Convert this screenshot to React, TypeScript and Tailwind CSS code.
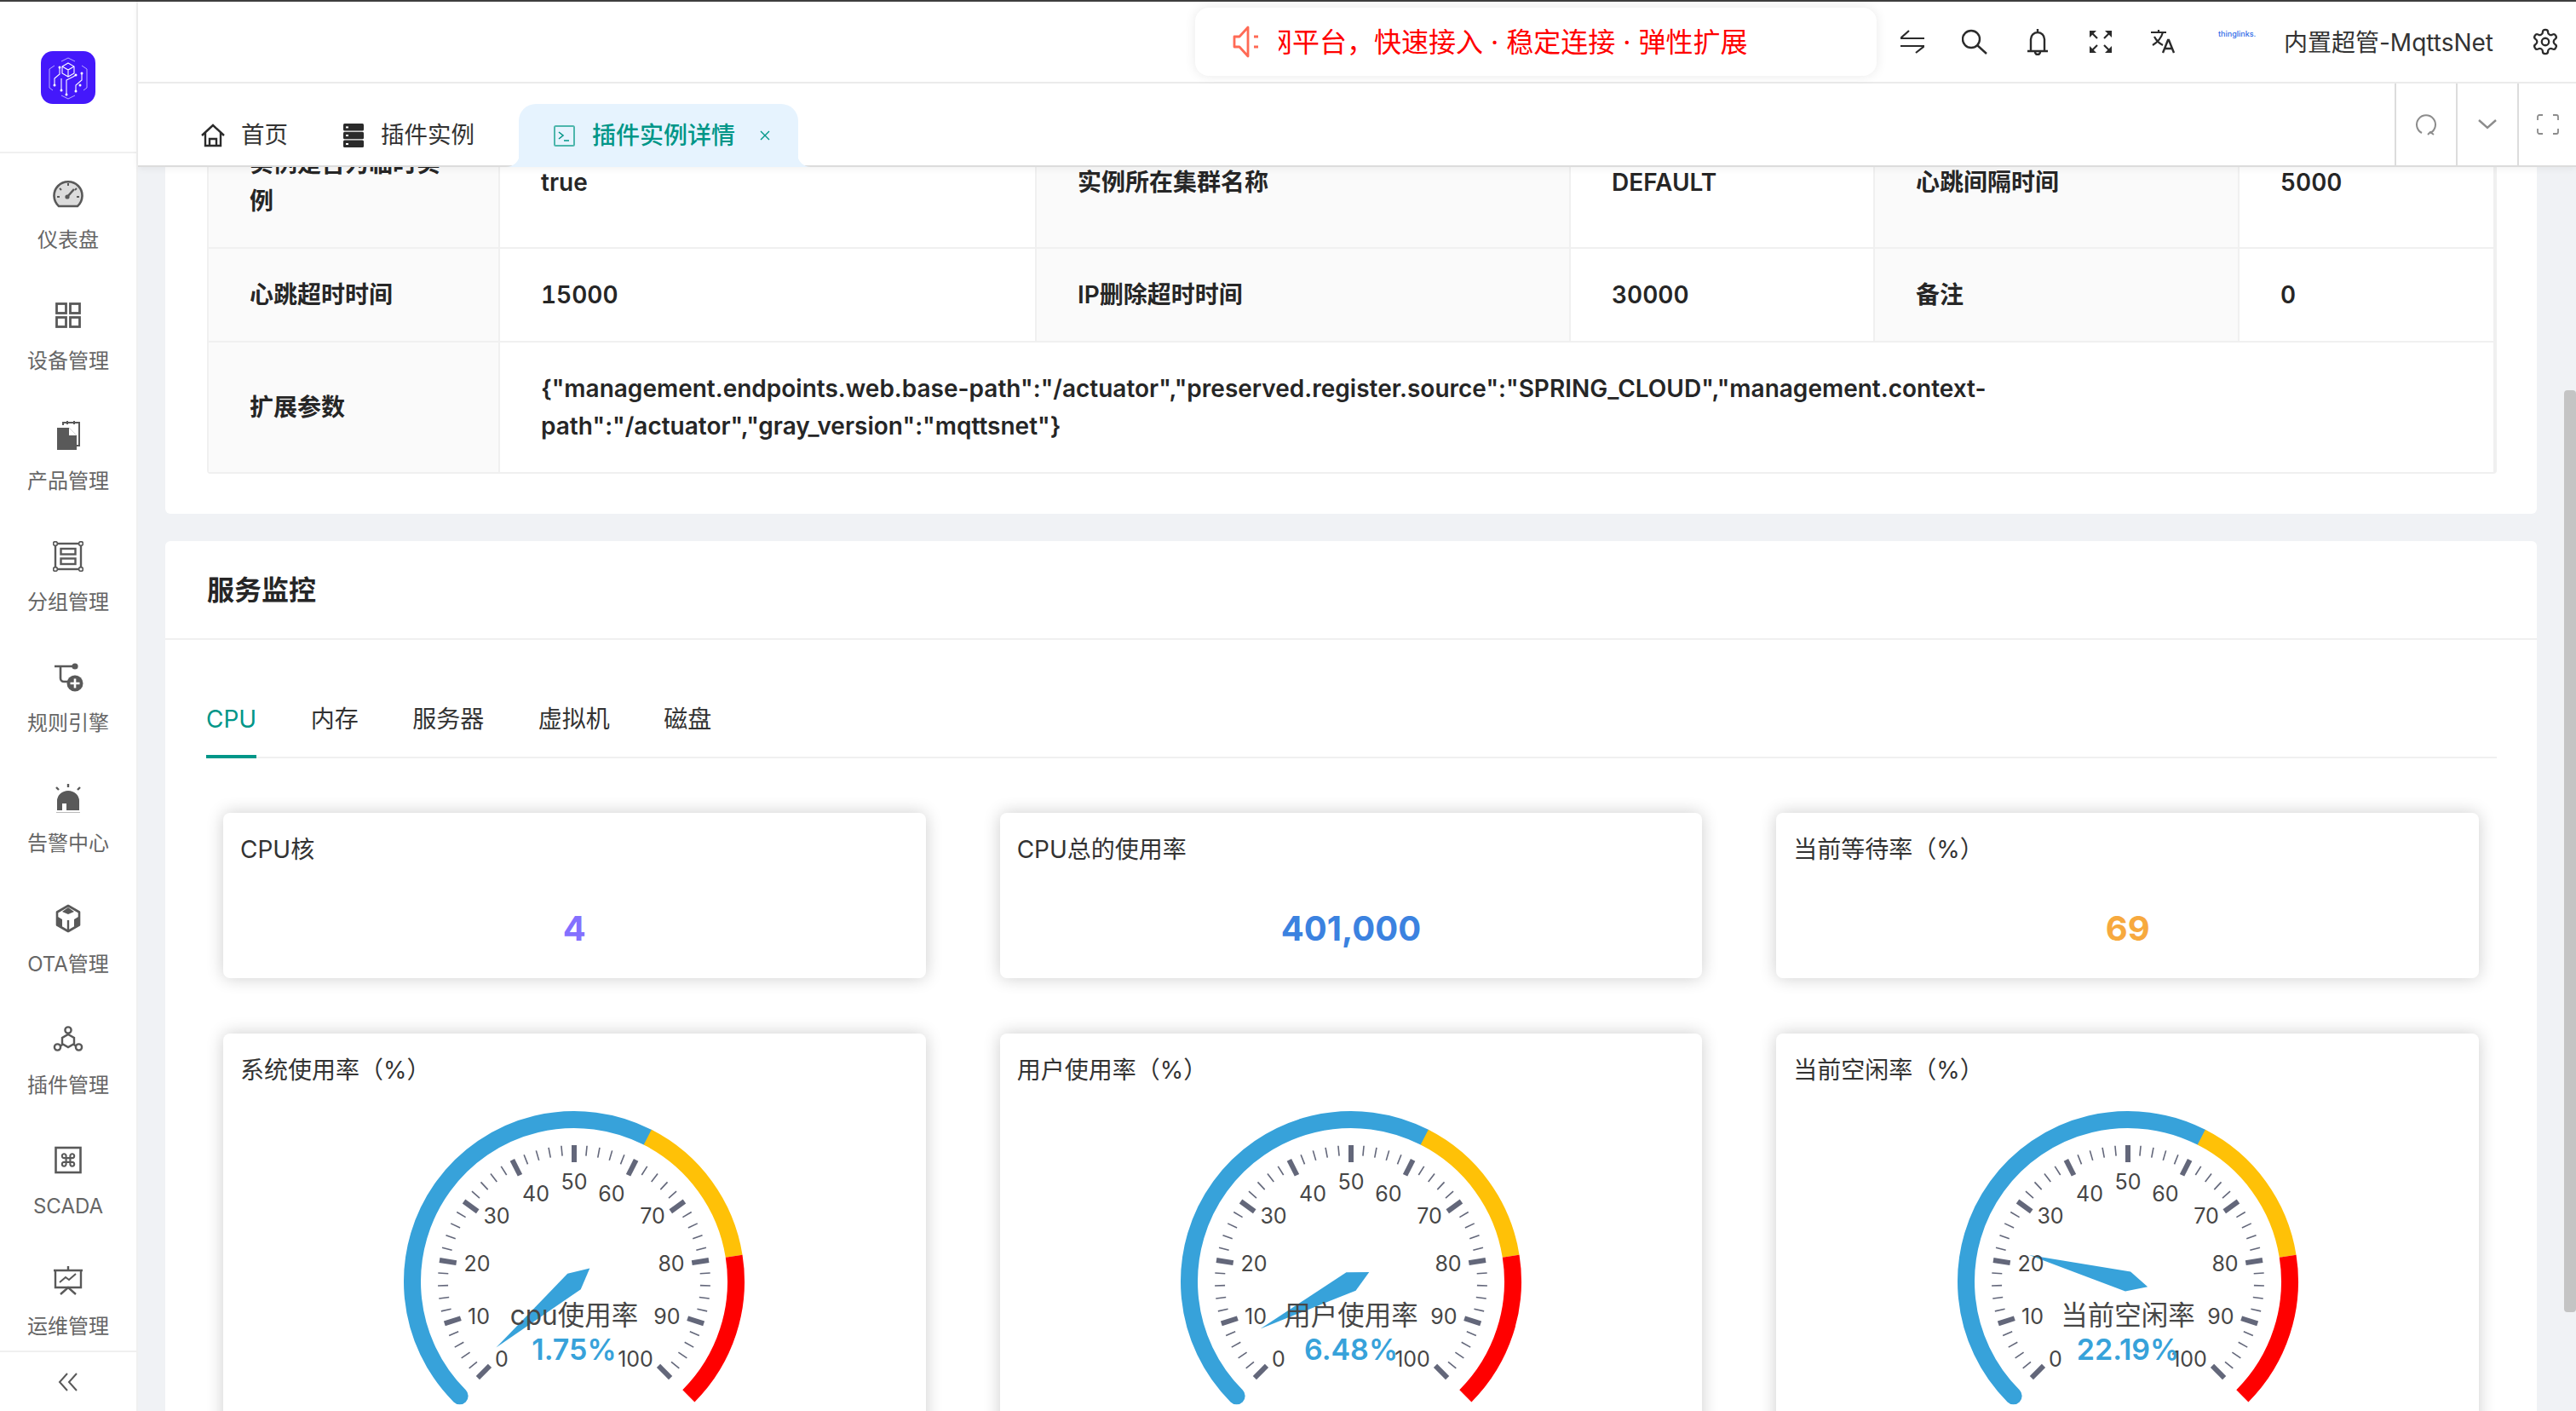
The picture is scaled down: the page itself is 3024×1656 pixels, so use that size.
import React from "react";

const FONT = { fontFamily: 'Inter, "Noto Sans CJK SC", sans-serif' };
const G = "#595959";

const Ico = ({ children, w = 36, h = 36, vb }: { children: React.ReactNode; w?: number; h?: number; vb?: string }) => (
  <svg width={w} height={h} viewBox={vb ?? `0 0 ${w} ${h}`} fill="none" className="block shrink-0">
    {children}
  </svg>
);

const sideItems: { label: string; icon: React.ReactNode }[] = [
  {
    label: "仪表盘",
    icon: (
      <Ico>
        <path d="M7 32 A16.5 16.5 0 1 1 29 32 Z" fill="#dcdcdc" stroke={G} strokeWidth="2.6" strokeLinejoin="round" />
        <path d="M18 5v3M8 11l2 2M28 11l-2 2M5 21h3M28 21h3" stroke={G} strokeWidth="2" />
        <path d="M17 21 L25 12" stroke={G} strokeWidth="2.6" />
        <circle cx="17" cy="21" r="2.6" fill={G} />
      </Ico>
    ),
  },
  {
    label: "设备管理",
    icon: (
      <Ico>
        <g stroke={G} strokeWidth="2.8">
          <rect x="4.5" y="4.5" width="11" height="11" />
          <rect x="20.5" y="4.5" width="11" height="11" />
          <rect x="4.5" y="20.5" width="11" height="11" />
          <rect x="20.5" y="20.5" width="11" height="11" />
        </g>
      </Ico>
    ),
  },
  {
    label: "产品管理",
    icon: (
      <Ico>
        <path d="M12 6V3h19v27h-3" stroke={G} strokeWidth="2" />
        <path d="M17 1v4M25 1v4" stroke={G} strokeWidth="2" />
        <path d="M5 9h14l9 9v17H5z" fill={G} />
        <path d="M19 9l9 9h-9z" fill="#fff" />
      </Ico>
    ),
  },
  {
    label: "分组管理",
    icon: (
      <Ico>
        <rect x="3" y="3" width="30" height="30" stroke={G} strokeWidth="2.4" />
        <rect x="9.5" y="9" width="17" height="6.5" stroke={G} strokeWidth="2.4" />
        <rect x="9.5" y="20.5" width="17" height="6.5" stroke={G} strokeWidth="2.4" />
        {[[3, 3], [33, 3], [3, 33], [33, 33]].map(([x, y]) => (
          <circle key={x + "-" + y} cx={x} cy={y} r="2.4" fill="#fff" stroke={G} strokeWidth="1.6" />
        ))}
      </Ico>
    ),
  },
  {
    label: "规则引擎",
    icon: (
      <Ico>
        <path d="M2 5h24M9 5v14a4 4 0 0 0 4 4h6" stroke={G} strokeWidth="2.6" />
        <circle cx="26" cy="5" r="3.6" fill={G} />
        <circle cx="26" cy="25" r="9.5" fill={G} />
        <path d="M20.5 25h11M26 19.5v11" stroke="#fff" strokeWidth="2.6" />
      </Ico>
    ),
  },
  {
    label: "告警中心",
    icon: (
      <Ico>
        <path d="M5 33V22a13 12 0 0 1 26 0v11H16v-8h-5v8z" fill={G} />
        <path d="M4 36h28" stroke="#aaa" strokeWidth="1.6" />
        <path d="M18 2v4M4 6l3 3M32 6l-3 3" stroke={G} strokeWidth="2.4" />
      </Ico>
    ),
  },
  {
    label: "OTA管理",
    icon: (
      <Ico>
        <path d="M18 3 L31 10.5 V25.5 L18 33 L5 25.5 V10.5 Z" stroke={G} strokeWidth="2.6" strokeLinejoin="round" />
        <path d="M18 5 L25 10 L18 13 L11 10 Z" fill={G} />
        <path d="M6 16 L11 19 V28 L6 25Z M30 16 L25 19 V28 L30 25Z" fill={G} />
        <path d="M18 20V32" stroke={G} strokeWidth="2.4" />
      </Ico>
    ),
  },
  {
    label: "插件管理",
    icon: (
      <Ico>
        <g stroke={G} strokeWidth="2.4">
          <path d="M18 12 L25 16 V23 L18 27 L11 23 V16 Z" />
          <circle cx="18" cy="7" r="3.6" />
          <circle cx="5.5" cy="27" r="3.6" />
          <circle cx="30.5" cy="27" r="3.6" />
          <path d="M9 25.5l3-2M27 25.5l-3-2M18 10.5v2" />
        </g>
      </Ico>
    ),
  },
  {
    label: "SCADA",
    icon: (
      <Ico>
        <rect x="3.5" y="3" width="29" height="29" stroke={G} strokeWidth="2.6" />
        <g transform="translate(8.4 7.9) scale(0.8)">
          <path
            d="M15 6v12a3 3 0 1 0 3-3H6a3 3 0 1 0 3 3V6a3 3 0 1 0-3 3h12a3 3 0 1 0-3-3"
            stroke={G}
            strokeWidth="2.6"
          />
        </g>
      </Ico>
    ),
  },
  {
    label: "运维管理",
    icon: (
      <Ico>
        <path d="M1 6h34M3 6v20h30V6" stroke={G} strokeWidth="2.4" />
        <path d="M8 20l7-6 4 3 8-7" stroke={G} strokeWidth="2" />
        <path d="M18 1v5M9 34l9-8 9 8" stroke={G} strokeWidth="2.4" />
      </Ico>
    ),
  },
];

const Logo = () => (
  <div className="flex h-[62px] w-[64px] items-center justify-center rounded-[14px] bg-[#4418fb]">
    <svg width="52" height="52" viewBox="0 0 52 52" fill="none">
      <g stroke="#b9abff" strokeWidth="1">
        <path d="M18 7l8-4 8 4M18 47l8 4 8-4M4 16l6-4M48 16l-6-4M4 16v22l4 3M48 16v22l-4 3" />
      </g>
      <g stroke="#fff" strokeWidth="1.1">
        <path d="M26 9l7 4v8l-7 4-7-4v-8zM19 13l7 4 7-4M26 17v8" />
        <path d="M16 14v8l-6 5v8M18 27v14M24 46V29l8-4 3-2M42 21v8l-7 6v7" />
      </g>
      <g fill="#fff">
        <circle cx="16" cy="14" r="1.5" />
        <circle cx="10" cy="35" r="1.5" />
        <circle cx="18" cy="41" r="1.5" />
        <circle cx="24" cy="46" r="1.5" />
        <circle cx="35" cy="23" r="1.5" />
        <circle cx="42" cy="21" r="1.5" />
        <circle cx="35" cy="42" r="1.5" />
        <circle cx="40" cy="35" r="1.5" />
      </g>
    </svg>
  </div>
);

const Sidebar = () => (
  <aside className="flex h-full w-[160px] shrink-0 flex-col bg-white">
    <div className="flex h-[178px] shrink-0 items-start justify-center border-b-2 border-[#f0f0f0] pt-[58px]">
      <Logo />
    </div>
    <div className="min-h-0 flex-1 overflow-hidden">
      {sideItems.map((it) => (
        <div key={it.label} className="flex h-[141.7px] flex-col items-center pt-[30px]">
          <div className="h-[36px]">{it.icon}</div>
          <div className="mt-[19px] text-[24px] leading-[34px] text-[#666666]">{it.label}</div>
        </div>
      ))}
    </div>
    <div className="flex h-[71px] shrink-0 items-center justify-center border-t-2 border-[#f0f0f0]">
      <Ico w={24} h={24}>
        <path d="M11 2L2 12l9 10M22 2l-9 10 9 10" stroke={G} strokeWidth="2" />
      </Ico>
    </div>
  </aside>
);

const S = "#2b2b2b";
const topIcons: React.ReactNode[] = [
  <Ico w={28} h={28} key="a">
    <path d="M0 10h28M0 10l10-9M0 19h28M28 19l-10 8" stroke={S} strokeWidth="2.2" />
  </Ico>,
  <Ico w={30} h={30} key="b">
    <circle cx="11" cy="12" r="10" stroke={S} strokeWidth="2.4" />
    <path d="M18 19l11 10" stroke={S} strokeWidth="2.4" />
  </Ico>,
  <Ico w={26} h={32} key="c">
    <path d="M5 26V13a8 8 0 0 1 16 0v13M1 27h24M13 1v4M10 28a3 3 0 0 0 6 0" stroke={S} strokeWidth="2.4" />
  </Ico>,
  <Ico w={28} h={28} key="d">
    <g stroke={S} strokeWidth="2.2">
      <path d="M3 3l7 7M25 3l-7 7M3 25l7-7M25 25l-7-7" />
    </g>
    <g fill={S}>
      <path d="M1 1h8L1 9zM27 1h-8l8 8zM1 27h8l-8-8zM27 27h-8l8-8z" />
    </g>
  </Ico>,
  <Ico w={30} h={28} key="e">
    <path d="M1 3h18M10 0v3M15 3c-2 7-7 12-12 15M5 8c2 4 6 8 10 10" stroke={S} strokeWidth="2.2" />
    <path d="M15 27l6-15h1l6 15M17.5 22h9" stroke={S} strokeWidth="2.4" />
  </Ico>,
];

const TopBar = () => (
  <div className="flex h-[94px] shrink-0 items-center bg-white">
    <div className="ml-[1241px] flex h-[80px] w-[800px] shrink-0 items-center rounded-[16px] bg-white pl-[44px] shadow-[0_0_14px_rgba(0,0,0,0.09)]">
      <Ico w={32} h={38}>
        <path d="M2 13h6l10-11v34L8 25H2z" stroke="#ff6a55" strokeWidth="2.8" strokeLinejoin="round" />
        <path d="M25 13h5M25 25h5" stroke="#ff6a55" strokeWidth="3" />
      </Ico>
      <div className="ml-[22px] w-[600px] overflow-hidden pt-[1px]">
        <div className="-ml-[16px] whitespace-nowrap text-[32px] leading-[44px] text-[#ff0000]">
          网平台，快速接入 · 稳定连接 · 弹性扩展
        </div>
      </div>
    </div>
    <div className="ml-[5px] flex items-center">
      {topIcons.map((ic, i) => (
        <div key={i} className="flex h-[60px] w-[73.6px] items-center justify-center">
          {ic}
        </div>
      ))}
    </div>
    <div className="-mt-[18px] ml-[28px] w-[50px] whitespace-nowrap text-[9px] font-medium leading-[12px] text-[#2f6be8]">thinglinks.</div>
    <div className="ml-[27px] whitespace-nowrap pt-[1px] text-[28px] leading-[40px] text-[#333333]">内置超管-MqttsNet</div>
    <svg width="34" height="34" viewBox="0 0 24 24" fill="none" stroke={S} strokeWidth="1.6" className="ml-[44px] shrink-0">
      <path d="M12.22 2h-.44a2 2 0 0 0-2 2v.18a2 2 0 0 1-1 1.73l-.43.25a2 2 0 0 1-2 0l-.15-.08a2 2 0 0 0-2.73.73l-.22.38a2 2 0 0 0 .73 2.73l.15.1a2 2 0 0 1 1 1.72v.51a2 2 0 0 1-1 1.74l-.15.09a2 2 0 0 0-.73 2.73l.22.38a2 2 0 0 0 2.73.73l.15-.08a2 2 0 0 1 2 0l.43.25a2 2 0 0 1 1 1.73V20a2 2 0 0 0 2 2h.44a2 2 0 0 0 2-2v-.18a2 2 0 0 1 1-1.73l.43-.25a2 2 0 0 1 2 0l.15.08a2 2 0 0 0 2.73-.73l.22-.39a2 2 0 0 0-.73-2.73l-.15-.08a2 2 0 0 1-1-1.74v-.5a2 2 0 0 1 1-1.74l.15-.09a2 2 0 0 0 .73-2.73l-.22-.38a2 2 0 0 0-2.73-.73l-.15.08a2 2 0 0 1-2 0l-.43-.25a2 2 0 0 1-1-1.73V4a2 2 0 0 0-2-2z" />
      <circle cx="12" cy="12" r="3" />
    </svg>
  </div>
);

const TEAL = "#009688";

const TabBar = () => (
  <div className="flex h-[100px] shrink-0 items-end border-y-2 border-t-[#ebebeb] border-b-[#dcdcdc] bg-white text-[27.5px] text-[#333333]">
    <div className="-mb-[2px] flex h-[74px] items-center pl-[74px]">
      <Ico w={28} h={28}>
        <path d="M1 14L14 2l13 12M5 11v15h18V11M10 26v-8h8v8" stroke={S} strokeWidth="2.4" />
      </Ico>
      <span className="ml-[19px]">首页</span>
    </div>
    <div className="-mb-[2px] ml-[65px] flex h-[74px] items-center">
      <Ico w={24} h={28}>
        <g fill={S}>
          <rect width="24" height="8.4" rx="1.5" />
          <rect y="9.8" width="24" height="8.4" rx="1.5" />
          <rect y="19.6" width="24" height="8.4" rx="1.5" />
        </g>
        <g fill="#fff">
          <rect x="3" y="3.4" width="3" height="2" />
          <rect x="3" y="13" width="3" height="2" />
          <rect x="3" y="23" width="3" height="2" />
        </g>
      </Ico>
      <span className="ml-[20px]">插件实例</span>
    </div>
    <div className="relative -mb-[2px] ml-[52px] flex h-[74px] items-center rounded-t-[20px] bg-[#e6f3fe] pl-[41px] pr-[33px]" style={{ color: TEAL }}>
      <svg width="16" height="16" viewBox="0 0 16 16" className="absolute -left-[15px] bottom-0">
        <path d="M0 16 C8 16 16 10 16 0 V16Z" fill="#e6f3fe" />
      </svg>
      <svg width="16" height="16" viewBox="0 0 16 16" className="absolute -right-[15px] bottom-0">
        <path d="M16 16 C8 16 0 10 0 0 V16Z" fill="#e6f3fe" />
      </svg>
      <Ico w={25} h={25}>
        <rect x="1" y="1" width="23" height="23" rx="1.5" stroke="#4db6ac" strokeWidth="2" />
        <path d="M6 8l5 4-5 4M12 18h6" stroke={TEAL} strokeWidth="1.6" />
      </Ico>
      <span className="ml-[20px] mr-[29px] text-[28px] font-medium">插件实例详情</span>
      <Ico w={12} h={12}>
        <path d="M1 1l10 10M11 1L1 11" stroke={TEAL} strokeWidth="1.4" />
      </Ico>
    </div>
    <div className="ml-auto flex h-full">
      <div className="flex w-[72px] items-center justify-center border-l-2 border-[#dcdcdc]">
        <Ico w={28} h={28}>
          <path d="M9 24A11 11 0 1 1 19 24" stroke="#8c8c8c" strokeWidth="2" />
          <path d="M16 26l3-3 4 3" stroke="#8c8c8c" strokeWidth="2" />
        </Ico>
      </div>
      <div className="flex w-[72px] items-center justify-center border-l-2 border-[#dcdcdc]">
        <Ico w={22} h={12}>
          <path d="M1 1l10 9 10-9" stroke="#8c8c8c" strokeWidth="2.4" />
        </Ico>
      </div>
      <div className="flex w-[69px] items-center justify-center border-l-2 border-[#dcdcdc]">
        <Ico w={26} h={24}>
          <path d="M1 7V3a2 2 0 0 1 2-2h4M19 1h4a2 2 0 0 1 2 2v4M25 17v4a2 2 0 0 1-2 2h-4M7 23H3a2 2 0 0 1-2-2v-4" stroke="#8c8c8c" strokeWidth="1.8" />
        </Ico>
      </div>
    </div>
  </div>
);

const labelCls = "flex items-center border-r-2 border-[#f0f0f0] bg-[#fafafa] px-[48px] py-[32px] font-semibold";
const valueCls = "flex items-center border-r-2 border-[#f0f0f0] px-[48px] py-[32px] font-semibold";

const InfoTable = () => (
  <div className="ml-[49px] mr-[47px] grid grid-cols-[342px_630px_627px_357px_428px_1fr] rounded-[4px] border-2 border-[#f0f0f0] text-[28px] leading-[44px] text-[#262626] tabular-nums">
    <div className={labelCls}>实例是否为临时实例</div>
    <div className={valueCls}>true</div>
    <div className={labelCls}>实例所在集群名称</div>
    <div className={valueCls}>DEFAULT</div>
    <div className={labelCls}>心跳间隔时间</div>
    <div className={valueCls + " border-r-0"}>5000</div>
    <div className={labelCls + " border-t-2"}>心跳超时时间</div>
    <div className={valueCls + " border-t-2"}>15000</div>
    <div className={labelCls + " border-t-2"}>IP删除超时时间</div>
    <div className={valueCls + " border-t-2"}>30000</div>
    <div className={labelCls + " border-t-2"}>备注</div>
    <div className={valueCls + " border-t-2 border-r-0"}>0</div>
    <div className={labelCls + " border-t-2"}>扩展参数</div>
    <div className={valueCls + " col-span-5 border-t-2 border-r-0"}>
      <span className="normal-nums">
        {'{"management.endpoints.web.base-path":"/actuator","preserved.register.source":"SPRING_CLOUD","management.context-path":"/actuator","gray_version":"mqttsnet"}'}
      </span>
    </div>
  </div>
);

const BLUE = "#37a2da";

function pt(r: number, deg: number) {
  const a = (deg * Math.PI) / 180;
  return [220 + r * Math.sin(a), 220 - r * Math.cos(a)];
}
function arc(r: number, a0: number, a1: number) {
  const [x0, y0] = pt(r, a0);
  const [x1, y1] = pt(r, a1);
  const large = a1 - a0 > 180 ? 1 : 0;
  return `M${x0} ${y0} A${r} ${r} 0 ${large} 1 ${x1} ${y1}`;
}

const tickLabels: [number, number, number][] = [
  [0, -85, 91],
  [10, -112, 41],
  [20, -114, -21],
  [30, -91, -77],
  [40, -45, -103],
  [50, 0, -117],
  [60, 44, -103],
  [70, 92, -77],
  [80, 114, -21],
  [90, 109, 41],
  [100, 72, 91],
];

const Gauge = ({ title, value }: { title: string; value: number }) => {
  const ticks = Array.from({ length: 51 }, (_, i) => i * 2);
  const ang = -135 + (value / 100) * 270;
  return (
    <svg width="440" height="440" viewBox="0 0 440 440" className="mx-auto mt-[6px] block" style={FONT}>
      <path d={arc(190, -135, 27)} stroke={BLUE} strokeWidth="20" fill="none" strokeLinecap="round" />
      <path d={arc(190, 27, 81)} stroke="#ffc107" strokeWidth="20" fill="none" />
      <path d={arc(190, 81, 135)} stroke="#ff0000" strokeWidth="20" fill="none" />
      {ticks.map((t) => {
        const major = t % 10 === 0;
        const d = -135 + (t / 100) * 270;
        const [x0, y0] = pt(major ? 140 : 148, d);
        const [x1, y1] = pt(160, d);
        return <line key={t} x1={x0} y1={y0} x2={x1} y2={y1} stroke="#63677a" strokeWidth={major ? 6 : 1.6} />;
      })}
      <g transform={`rotate(${ang} 220 220)`}>
        <path d="M220 100 L232 220 L220 244 L208 220 Z" fill={BLUE} />
      </g>
      {tickLabels.map(([n, dx, dy]) => (
        <text key={n} x={220 + dx} y={220 + dy + 8.5} textAnchor="middle" fontSize="25" fill="#464646">
          {n}
        </text>
      ))}
      <text x="220" y="271" textAnchor="middle" fontSize="31.5" fill="#464646">
        {title}
      </text>
      <text x="220" y="312" textAnchor="middle" fontSize="34" fontWeight="600" fill={BLUE}>
        {value.toFixed(2)}%
      </text>
    </svg>
  );
};

const cardCls = "rounded-[8px] bg-white shadow-[0_0_20px_rgba(0,0,0,0.2)]";

const StatCard = ({ title, value, cls }: { title: string; value: string; cls: string }) => (
  <div className={cardCls + " h-[194px] px-[20px] pt-[21px]"}>
    <div className="text-[28px] leading-[44px] text-[#333333]">{title}</div>
    <div className={"mt-[47px] text-center text-[40px] font-bold leading-[48px] " + cls}>{value}</div>
  </div>
);

const GaugeCard = ({ title, gtitle, value }: { title: string; gtitle: string; value: number }) => (
  <div className={cardCls + " h-[560px] px-[20px] pt-[21px]"}>
    <div className="text-[28px] leading-[44px] text-[#333333]">{title}</div>
    <Gauge title={gtitle} value={value} />
  </div>
);

const Monitor = () => (
  <div className="mt-[32px] rounded-[6px] bg-white">
    <div className="flex h-[116px] items-center border-b-2 border-[#f0f0f0] pl-[49px] pt-[2px] text-[32px] font-semibold text-[#262626]">
      服务监控
    </div>
    <div className="ml-[48px] mr-[47px] flex h-[139px] items-end gap-[63.5px] border-b-2 border-[#f0f0f0] text-[28px] leading-[44px] text-[#333333]">
      <div className="-mb-[2px] border-b-4 pb-[20px]" style={{ color: TEAL, borderColor: TEAL }}>
        CPU
      </div>
      <div className="pb-[22px]">内存</div>
      <div className="pb-[22px]">服务器</div>
      <div className="pb-[22px]">虚拟机</div>
      <div className="pb-[22px]">磁盘</div>
    </div>
    <div className="ml-[68px] mr-[68px] mt-[64px] grid grid-cols-3 gap-x-[87px] gap-y-[65px]">
      <StatCard title="CPU核" value="4" cls="text-[#8470ff]" />
      <StatCard title="CPU总的使用率" value="401,000" cls="text-[#3b82e0]" />
      <StatCard title="当前等待率（%）" value="69" cls="text-[#f7a93e]" />
      <GaugeCard title="系统使用率（%）" gtitle="cpu使用率" value={1.75} />
      <GaugeCard title="用户使用率（%）" gtitle="用户使用率" value={6.48} />
      <GaugeCard title="当前空闲率（%）" gtitle="当前空闲率" value={22.19} />
    </div>
  </div>
);

export default function App() {
  return (
    <div className="flex h-[1656px] w-[3024px] flex-col overflow-hidden bg-[#f0f2f5]" style={FONT}>
      <div className="h-[2px] shrink-0 bg-[#3f3f3f]" />
      <div className="flex min-h-0 flex-1">
        <Sidebar />
        <div className="flex min-w-0 flex-1 flex-col border-l-2 border-[#f0f0f0]">
          <header className="relative z-10 shrink-0 shadow-[0_2px_8px_rgba(0,0,0,0.06)]">
            <TopBar />
            <TabBar />
          </header>
          <div className="flex min-h-0 flex-1">
            <main className="min-w-0 flex-1 overflow-hidden pl-[32px] pr-[32px]">
              <div className="-mt-[60px] rounded-b-[6px] bg-white pb-[47px]">
                <InfoTable />
              </div>
              <Monitor />
            </main>
            <div className="w-[14px] shrink-0">
              <div className="mt-[262px] h-[1082px] rounded-[4px] bg-[#c4c4c4]" />
            </div>
          </div>
        </div>
      </div>
    </div>
  );
}
